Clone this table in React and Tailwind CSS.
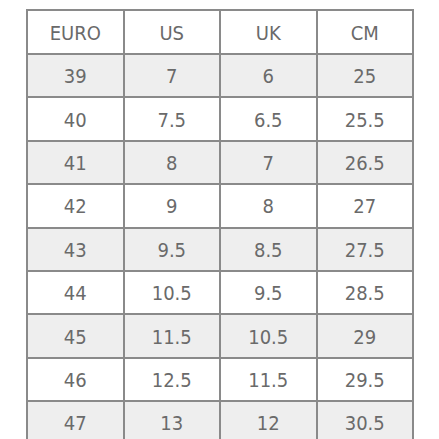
import React from 'react';

const header = ['EURO', 'US', 'UK', 'CM'];

const rows = [
  ['39', '7', '6', '25'],
  ['40', '7.5', '6.5', '25.5'],
  ['41', '8', '7', '26.5'],
  ['42', '9', '8', '27'],
  ['43', '9.5', '8.5', '27.5'],
  ['44', '10.5', '9.5', '28.5'],
  ['45', '11.5', '10.5', '29'],
  ['46', '12.5', '11.5', '29.5'],
  ['47', '13', '12', '30.5'],
];

const App = () => {
  return (
    <div
      className="w-[439px] h-[439px] overflow-hidden bg-white pl-[26px] pt-[9px]"
      style={{ fontFamily: '"DejaVu Sans Condensed", "Open Sans", sans-serif' }}
    >
      <div className="w-[388px] bg-[#8a8a8a] p-[2px] grid grid-cols-4 gap-[2px] text-[20px] text-[#6a6a6a]">
        {header.map((h) => (
          <div key={h} className="h-[42px] pt-[1px] bg-white flex items-center justify-center">
            {h}
          </div>
        ))}
        {rows.map((row, i) =>
          row.map((v, j) => (
            <div
              key={`${i}-${j}`}
              className={`h-[41.4px] pt-[1px] flex items-center justify-center ${i % 2 === 0 ? 'bg-[#eeeeee]' : 'bg-white'}`}
            >
              {v}
            </div>
          ))
        )}
      </div>
    </div>
  );
};

export default App;
